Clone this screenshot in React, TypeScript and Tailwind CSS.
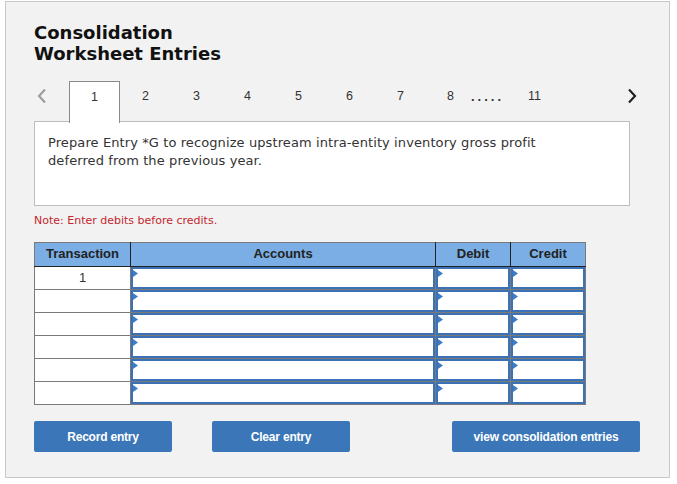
import React from "react"

const rows = [1, 2, 3, 4, 5, 6]

const Marker = () => (
  <svg className="absolute left-0 top-[1px]" width="5" height="7" viewBox="0 0 5 7">
    <path d="M0 0 L5 3.5 L0 7 Z" fill="#3d7cc9" />
  </svg>
)

const EntryCell = () => (
  <td className="border border-[#7a7a7a] p-0">
    <div className="relative h-[22px] border-2 border-[#3b72b5] bg-white">
      <Marker />
    </div>
  </td>
)

const App = () => {
  const tabs = ["1", "2", "3", "4", "5", "6", "7"]

  return (
    <div className="pt-[1px] pl-[5px] font-['DejaVu_Sans',Verdana,sans-serif]">
      <div className="w-[665px] h-[477px] border border-[#c9c9c9] bg-[#f2f2f2] pl-[28px] pt-[20px]">
        {/* title */}
        <h1 className="text-[18px] leading-[21px] font-bold text-[#111]">
          Consolidation
          <br />
          Worksheet Entries
        </h1>

        {/* tab nav */}
        <div className="mt-[16px] flex h-[41px] w-[595px] items-start font-['Liberation_Sans',Arial,sans-serif] text-[12.5px] leading-[15px] text-[#333]">
          <div className="flex w-[35px] pl-[3px] pt-[8px]">
            <svg width="10" height="16" viewBox="0 0 10 16">
              <path d="M8 1.5 L2 8 L8 14.5" fill="none" stroke="#9a9a9a" strokeWidth="2" />
            </svg>
          </div>
          {tabs.map((t, i) =>
            i === 0 ? (
              <div
                key={t}
                className="relative z-10 mt-[1px] flex h-[42px] w-[51px] justify-center border border-b-0 border-[#8a8a8a] bg-white pt-[8px]"
              >
                {t}
              </div>
            ) : (
              <div key={t} className="flex w-[51px] justify-center pt-[9px]">
                {t}
              </div>
            )
          )}
          <div className="flex pt-[9px]">
            <span className="pl-[21px]">8</span>
            <span className="ml-[17px] text-[13px] font-bold tracking-[3px] text-[#333]">.....</span>
            <span className="ml-[24px]">11</span>
          </div>
          <div className="ml-auto mr-[-8px] pt-[8px]">
            <svg width="10" height="16" viewBox="0 0 10 16">
              <path d="M2 1.5 L8 8 L2 14.5" fill="none" stroke="#222" strokeWidth="2.2" />
            </svg>
          </div>
        </div>

        {/* prompt */}
        <div className="h-[85px] w-[596px] border border-[#bdbdbd] bg-white pl-[13px] pt-[12px] text-[13px] leading-[18px] tracking-[0.1px] text-[#333]">
          Prepare Entry *G to recognize upstream intra-entity inventory gross profit
          <br />
          deferred from the previous year.
        </div>

        <p className="mt-[8px] text-[11px] leading-[14px] text-[#c6262e]">Note: Enter debits before credits.</p>

        {/* journal table */}
        <table className="mt-[14px] w-[552px] table-fixed border-collapse border border-[#7a7a7a] font-['Liberation_Sans',Arial,sans-serif]">
          <colgroup>
            <col className="w-[96px]" />
            <col className="w-[305px]" />
            <col className="w-[75px]" />
            <col className="w-[75px]" />
          </colgroup>
          <thead>
            <tr className="h-[24px] bg-[#7aaee5] text-[13px] font-bold text-[#222]">
              <th className="border border-[#7a7a7a] border-r-[#222] border-b-[#222] pb-[1px] font-bold">Transaction</th>
              <th className="border border-[#7a7a7a] border-r-[#222] border-b-[#222] pb-[1px] font-bold">Accounts</th>
              <th className="border border-[#7a7a7a] border-r-[#222] border-b-[#222] pb-[1px] font-bold">Debit</th>
              <th className="border border-[#7a7a7a] border-b-[#222] pb-[1px] font-bold">Credit</th>
            </tr>
          </thead>
          <tbody>
            {rows.map((r) => (
              <tr key={r} className="h-[23px]">
                <td className="border border-[#7a7a7a] bg-white p-0 text-center text-[13px] text-[#333]">
                  {r === 1 ? "1" : ""}
                </td>
                <EntryCell />
                <EntryCell />
                <EntryCell />
              </tr>
            ))}
          </tbody>
        </table>

        {/* actions */}
        <div className="mt-[16px] flex font-['Liberation_Sans',Arial,sans-serif] text-[12px] font-bold text-white">
          <button className="h-[31px] w-[138px] rounded-[2px] bg-[#3a76b8] tracking-[-0.2px]">Record entry</button>
          <button className="ml-[40px] h-[31px] w-[138px] rounded-[2px] bg-[#3a76b8] tracking-[-0.2px]">Clear entry</button>
          <button className="ml-[102px] h-[31px] w-[188px] rounded-[2px] bg-[#3a76b8] tracking-[-0.2px]">
            view consolidation entries
          </button>
        </div>
      </div>
    </div>
  )
}

export default App
